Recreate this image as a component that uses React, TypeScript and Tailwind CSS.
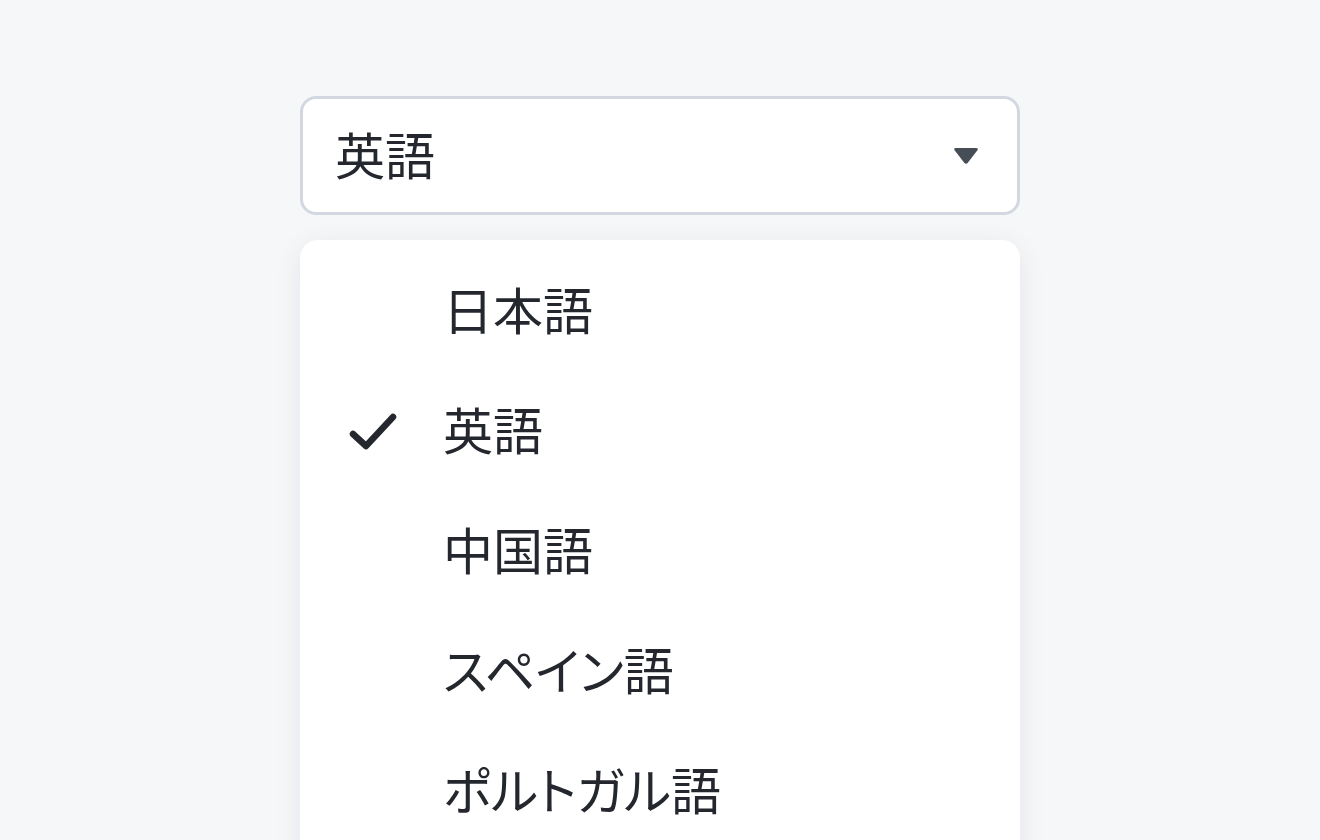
import React from 'react';

const languages = ['日本語', '英語', '中国語', 'スペイン語', 'ポルトガル語'];

const Check = () => (
  <svg viewBox="0 0 48 40" className="h-[40px] w-[48px]" fill="none" stroke="currentColor" strokeWidth="6.5" strokeLinecap="round" strokeLinejoin="round">
    <path d="M4 22 L17 34 L44 5" />
  </svg>
);

const Caret = () => (
  <svg viewBox="0 0 26 20" className="h-[20px] w-[26px] text-[#474d57]" fill="currentColor">
    <path d="M3 2 H23 Q26 2 24.2 4.6 L15 16.6 Q13 19 11 16.6 L1.8 4.6 Q0 2 3 2 Z" />
  </svg>
);

const App = () => {
  const selected = '英語';
  return (
    <div
      className="h-[840px] w-full overflow-hidden bg-[#f6f7f9] text-[#24282e]"
      style={{ fontFamily: '"Noto Sans CJK JP", "Noto Sans", sans-serif' }}
    >
      <div className="flex w-[720px] flex-col gap-[25px] pl-[300px] pt-[96px] box-content">
        <button className="flex h-[119px] w-[720px] items-center justify-between rounded-[16px] border-[3px] border-[#d3d8e0] bg-white pl-[32px] pr-[38px] text-left">
          <span className="-mt-[6px] text-[50px] leading-none [font-feature-settings:'palt']">{selected}</span>
          <Caret />
        </button>
        <div className="h-[700px] w-[720px] rounded-[18px] bg-white pt-[12px] shadow-[0_6px_28px_rgba(17,24,39,0.08)]">
          {languages.map((lang) => (
            <div key={lang} className="flex h-[120px] items-center">
              <div className="flex w-[143px] justify-end pr-[46px] mt-[0px]">
                {lang === selected && <Check />}
              </div>
              <span className="-mt-[8px] text-[50px] leading-none [font-feature-settings:'palt']">{lang}</span>
            </div>
          ))}
        </div>
      </div>
    </div>
  );
};

export default App;
